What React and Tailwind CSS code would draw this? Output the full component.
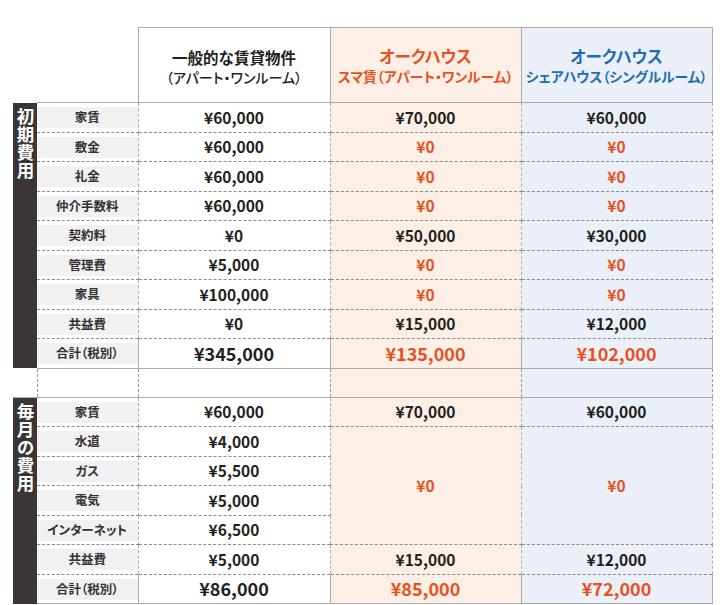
import React from 'react'

const font = { fontFamily: '"Noto Sans CJK JP", "Noto Sans", sans-serif' }

const initialRows = [
  { label: '家賃', a: '¥60,000', b: '¥70,000', c: '¥60,000' },
  { label: '敷金', a: '¥60,000', b: '¥0', c: '¥0', zero: true },
  { label: '礼金', a: '¥60,000', b: '¥0', c: '¥0', zero: true },
  { label: '仲介手数料', a: '¥60,000', b: '¥0', c: '¥0', zero: true },
  { label: '契約料', a: '¥0', b: '¥50,000', c: '¥30,000' },
  { label: '管理費', a: '¥5,000', b: '¥0', c: '¥0', zero: true },
  { label: '家具', a: '¥100,000', b: '¥0', c: '¥0', zero: true },
  { label: '共益費', a: '¥0', b: '¥15,000', c: '¥12,000' },
]

const utilities = [
  { label: '水道', a: '¥4,000' },
  { label: 'ガス', a: '¥5,500' },
  { label: '電気', a: '¥5,000' },
  { label: 'インターネット', a: '¥6,500' },
]

const dashed = 'border-b border-dashed border-b-[#8c8c8c]'
const solidR = 'border-r border-r-[#ababab]'
const orangeBg = 'bg-[#fdefe5]'
const blueBg = 'bg-[#ebeff8]'

const SideLabel = ({ text, rows }) => (
  <td rowSpan={rows} className="bg-[#3b3635] align-top p-0">
    <div className="flex justify-center pt-[5px]">
      <div className="[writing-mode:vertical-rl] text-white font-bold text-[17.5px] leading-[22px] tracking-[0.5px]">
        {text}
      </div>
    </div>
  </td>
)

const Label = ({ text, last }) => (
  <td className={`p-0 ${last ? 'border-b border-b-[#ababab]' : dashed} border-r border-r-[#ababab]`}>
    <div className="h-[21px] mt-[1px] bg-[#f1f1f1] flex items-center justify-center text-[12.5px] font-semibold text-[#333] [font-feature-settings:'palt']">
      {text}
    </div>
  </td>
)

const Val = ({ children, className = '', last, total, rowSpan }) => (
  <td
    rowSpan={rowSpan}
    className={`p-0 text-center font-bold ${total ? 'text-[18px]' : 'text-[15.5px]'} ${
      last ? 'border-b border-b-[#ababab]' : dashed
    } ${solidR} ${className}`}
  >
    {children}
  </td>
)

const App = () => {
  return (
    <div className="w-[725px] h-[605px] bg-white text-[#231f20]" style={font}>
      <table className="table-fixed border-collapse ml-[13px] mt-[27px] w-[699px]">
        <colgroup>
          <col className="w-[24px]" />
          <col className="w-[101px]" />
          <col className="w-[192px]" />
          <col className="w-[191px]" />
          <col className="w-[191px]" />
        </colgroup>
        <tbody>
          {/* header */}
          <tr className="h-[75px]">
            <td className="p-0" />
            <td className="p-0 border-b border-b-[#ababab]" />
            <th className="p-0 pt-[2px] border border-[#ababab] font-bold">
              <div className="text-[15.5px] leading-[21px]">一般的な賃貸物件</div>
              <div className="text-[14px] font-medium leading-[18px] [font-feature-settings:'palt']">（アパート・ワンルーム）</div>
            </th>
            <th className={`p-0 pt-[1px] border border-[#ababab] ${orangeBg} text-[#e8511e]`}>
              <div className="text-[16.5px] font-bold leading-[20px] [font-feature-settings:'palt']">オークハウス</div>
              <div className="mt-[1px] text-[13.8px] font-semibold leading-[18px] [font-feature-settings:'palt']">スマ賃（アパート・ワンルーム）</div>
            </th>
            <th className={`p-0 pt-[1px] border border-[#ababab] ${blueBg} text-[#1d6db4]`}>
              <div className="text-[16.5px] font-bold leading-[20px] [font-feature-settings:'palt']">オークハウス</div>
              <div className="mt-[1px] text-[13.8px] font-semibold leading-[18px] [font-feature-settings:'palt']">シェアハウス（シングルルーム）</div>
            </th>
          </tr>

          {/* initial costs */}
          {initialRows.map((r, i) => (
            <tr key={r.label} className="h-[29.5px]">
              {i === 0 && <SideLabel text="初期費用" rows={9} />}
              <Label text={r.label} />
              <Val>{r.a}</Val>
              <Val className={`${orangeBg} ${r.zero ? 'text-[#e8511e]' : ''}`}>{r.b}</Val>
              <Val className={`${blueBg} ${r.zero ? 'text-[#e8511e]' : ''}`}>{r.c}</Val>
            </tr>
          ))}
          <tr className="h-[29.5px]">
            <Label text="合計（税別）" last />
            <Val last total>¥345,000</Val>
            <Val last total className={`${orangeBg} text-[#e8511e]`}>¥135,000</Val>
            <Val last total className={`${blueBg} text-[#e8511e]`}>¥102,000</Val>
          </tr>

          {/* spacer */}
          <tr className="h-[29px]">
            <td className="p-0" />
            <td className="p-0 border-l border-r border-dashed border-[#9a9a9a]" />
            <td className="p-0 border-r border-dashed border-[#9a9a9a]" />
            <td className={`p-0 border-r border-dashed border-[#9a9a9a] ${orangeBg}`} />
            <td className={`p-0 border-r border-dashed border-[#9a9a9a] ${blueBg}`} />
          </tr>

          {/* monthly costs */}
          <tr className="h-[29.5px] border-t border-t-[#ababab]">
            <SideLabel text="毎月の費用" rows={7} />
            <Label text="家賃" />
            <Val>¥60,000</Val>
            <Val className={orangeBg}>¥70,000</Val>
            <Val className={blueBg}>¥60,000</Val>
          </tr>
          {utilities.map((r, i) => (
            <tr key={r.label} className="h-[29.5px]">
              <Label text={r.label} />
              <Val>{r.a}</Val>
              {i === 0 && (
                <>
                  <Val rowSpan={4} className={`${orangeBg} text-[#e8511e]`}>¥0</Val>
                  <Val rowSpan={4} className={`${blueBg} text-[#e8511e]`}>¥0</Val>
                </>
              )}
            </tr>
          ))}
          <tr className="h-[29.5px]">
            <Label text="共益費" />
            <Val>¥5,000</Val>
            <Val className={orangeBg}>¥15,000</Val>
            <Val className={blueBg}>¥12,000</Val>
          </tr>
          <tr className="h-[29.5px]">
            <Label text="合計（税別）" last />
            <Val last total>¥86,000</Val>
            <Val last total className={`${orangeBg} text-[#e8511e]`}>¥85,000</Val>
            <Val last total className={`${blueBg} text-[#e8511e]`}>¥72,000</Val>
          </tr>
        </tbody>
      </table>
    </div>
  )
}

export default App
